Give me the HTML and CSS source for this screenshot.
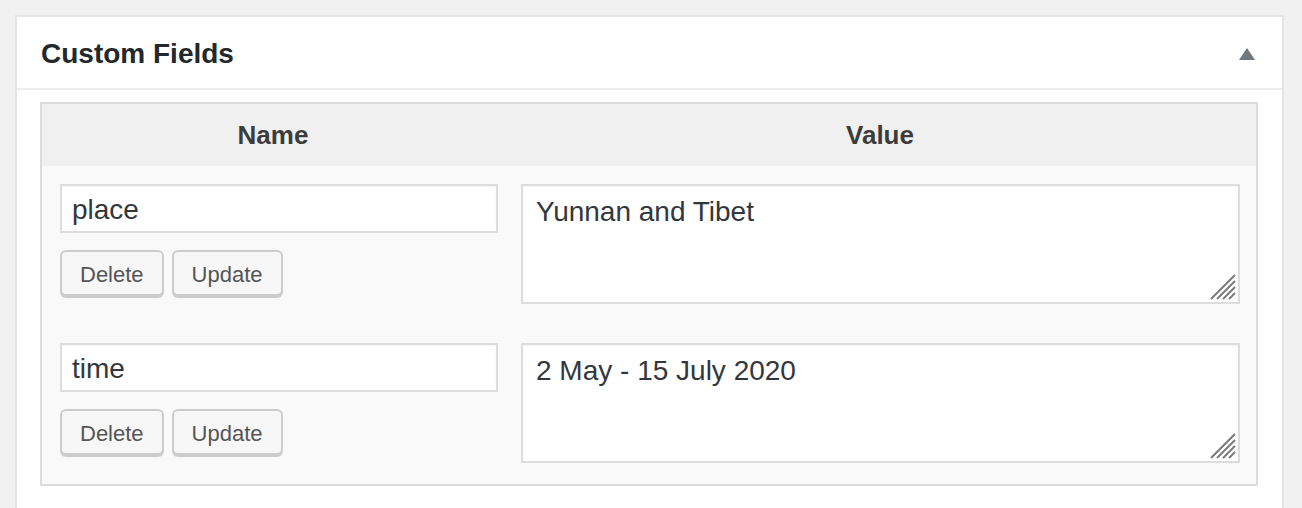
FILE: index.html
```html
<!DOCTYPE html>
<html lang="en">
<head>
<meta charset="utf-8">
<title>Custom Fields</title>
<link rel="stylesheet" href="styles.css">
</head>
<body>
<div class="postbox">
  <div class="postbox-header">
    <h2 class="postbox-title">Custom Fields</h2>
    <svg class="toggle" width="16" height="12" viewBox="0 0 16 12" aria-hidden="true"><polygon points="8,0 16,12 0,12" fill="#72777c"/></svg>
  </div>
  <div class="inside">
    <div class="list-table">
      <div class="thead">
        <div class="th">Name</div>
        <div class="th">Value</div>
      </div>
      <div class="row">
        <div class="cell-name">
          <input class="name-input" type="text" value="place">
          <div class="actions">
            <button class="btn">Delete</button>
            <button class="btn">Update</button>
          </div>
        </div>
        <div class="cell-value">
          <div class="ta-wrap">
            <textarea class="value-input">Yunnan and Tibet</textarea>
            <svg class="grip" width="26" height="26" viewBox="0 0 26 26" aria-hidden="true"><g stroke="#7a7a7a" stroke-width="2" stroke-linecap="butt"><line x1="1" y1="25" x2="25" y2="1"/><line x1="7" y1="25" x2="25" y2="7"/><line x1="13" y1="25" x2="25" y2="13"/><line x1="19" y1="25" x2="25" y2="19"/></g></svg>
          </div>
        </div>
      </div>
      <div class="row">
        <div class="cell-name">
          <input class="name-input" type="text" value="time">
          <div class="actions">
            <button class="btn">Delete</button>
            <button class="btn">Update</button>
          </div>
        </div>
        <div class="cell-value">
          <div class="ta-wrap">
            <textarea class="value-input">2 May - 15 July 2020</textarea>
            <svg class="grip" width="26" height="26" viewBox="0 0 26 26" aria-hidden="true"><g stroke="#7a7a7a" stroke-width="2" stroke-linecap="butt"><line x1="1" y1="25" x2="25" y2="1"/><line x1="7" y1="25" x2="25" y2="7"/><line x1="13" y1="25" x2="25" y2="13"/><line x1="19" y1="25" x2="25" y2="19"/></g></svg>
          </div>
        </div>
      </div>
    </div>
  </div>
</div>
</body>
</html>
```

FILE: styles.css
```css
html, body {
  margin: 0;
  padding: 0;
  background: #f1f1f1;
  font-family: "Liberation Sans", Arial, sans-serif;
  overflow: hidden;
}

.postbox {
  margin: 15px 0 0 15px;
  width: 1269px;
  box-sizing: border-box;
  border: 2px solid #e5e5e5;
  border-bottom: none;
  background: #fff;
  height: calc(100vh - 15px);
  overflow: hidden;
}

.postbox-header {
  height: 71px;
  border-bottom: 2px solid #eeeeee;
  display: flex;
  align-items: center;
  justify-content: space-between;
  padding: 0 27px 0 24px;
}

.postbox-title {
  margin: 2px 0 0 0;
  font-size: 28px;
  line-height: 28px;
  font-weight: bold;
  color: #23282d;
}

.toggle {
  display: block;
  margin-top: 2px;
}

.inside {
  padding: 12px 24px 0 23px;
}

.list-table {
  border: 2px solid #dcdcde;
  background: #f9f9f9;
}

.thead {
  display: grid;
  grid-template-columns: 462px 1fr;
  height: 62px;
  background: #f0f0f0;
}

.th {
  display: flex;
  align-items: center;
  justify-content: center;
  font-size: 26px;
  font-weight: bold;
  color: #3c3c3c;
  padding-top: 1px;
}

.row {
  display: grid;
  grid-template-columns: 462px 1fr;
  height: 159px;
}

.cell-name {
  padding: 18px 6px 0 18px;
  display: flex;
  flex-direction: column;
}

.name-input {
  box-sizing: border-box;
  width: 438px;
  height: 49px;
  margin: 0;
  border: 2px solid #dddddd;
  box-shadow: inset 0 1px 2px rgba(0,0,0,0.05);
  background: #fff;
  padding: 2px 10px 0 10px;
  font-family: "Liberation Sans", Arial, sans-serif;
  font-size: 28px;
  color: #32373c;
  outline: none;
}

.actions {
  display: flex;
  gap: 8px;
  margin-top: 17px;
}

.btn {
  box-sizing: border-box;
  height: 46px;
  margin: 0;
  padding: 4px 18px 0 18px;
  border: 2px solid #cccccc;
  border-radius: 6px;
  background: #f7f7f7;
  box-shadow: 0 2px 0 #cccccc;
  font-family: "Liberation Sans", Arial, sans-serif;
  font-size: 22px;
  color: #555555;
}

.cell-value {
  padding: 18px 16px 0 17px;
}

.ta-wrap {
  position: relative;
  height: 120px;
}

.value-input {
  display: block;
  box-sizing: border-box;
  width: 100%;
  height: 120px;
  margin: 0;
  border: 2px solid #dddddd;
  box-shadow: inset 0 1px 2px rgba(0,0,0,0.05);
  background: #fff;
  padding: 5px 13px;
  font-family: "Liberation Sans", Arial, sans-serif;
  font-size: 28px;
  line-height: 42px;
  color: #32373c;
  resize: none;
  outline: none;
  overflow: hidden;
}

.grip {
  position: absolute;
  right: 4px;
  bottom: 4px;
}
```
